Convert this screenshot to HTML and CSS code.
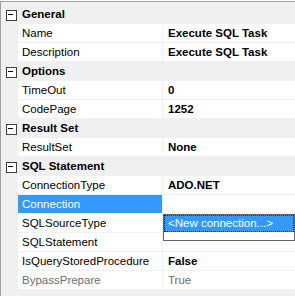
FILE: index.html
```html
<!DOCTYPE html>
<html lang="en">
<head>
    <meta charset="UTF-8">
    <title>Properties</title>
    <link rel="stylesheet" href="styles.css">
</head>
<body>

    <div class="grid">

        <!-- General -->
        <div class="row cat"><span class="toggle"></span><span class="cat-name">General</span></div>
        <div class="row"><span class="gutter"></span><span class="name">Name</span><span class="value bold">Execute SQL Task</span></div>
        <div class="row"><span class="gutter"></span><span class="name">Description</span><span class="value bold">Execute SQL Task</span></div>

        <!-- Options -->
        <div class="row cat"><span class="toggle"></span><span class="cat-name">Options</span></div>
        <div class="row"><span class="gutter"></span><span class="name">TimeOut</span><span class="value bold">0</span></div>
        <div class="row"><span class="gutter"></span><span class="name">CodePage</span><span class="value bold">1252</span></div>

        <!-- Result Set -->
        <div class="row cat"><span class="toggle"></span><span class="cat-name">Result Set</span></div>
        <div class="row"><span class="gutter"></span><span class="name">ResultSet</span><span class="value bold">None</span></div>

        <!-- SQL Statement -->
        <div class="row cat"><span class="toggle"></span><span class="cat-name">SQL Statement</span></div>
        <div class="row"><span class="gutter"></span><span class="name">ConnectionType</span><span class="value bold">ADO.NET</span></div>
        <div class="row selected"><span class="gutter"></span><span class="name">Connection</span><span class="value"></span></div>
        <div class="row"><span class="gutter"></span><span class="name">SQLSourceType</span><span class="value"></span></div>
        <div class="row"><span class="gutter"></span><span class="name">SQLStatement</span><span class="value"></span></div>
        <div class="row"><span class="gutter"></span><span class="name">IsQueryStoredProcedure</span><span class="value bold">False</span></div>
        <div class="row disabled"><span class="gutter"></span><span class="name">BypassPrepare</span><span class="value">True</span></div>

        <!-- Connection dropdown -->
        <div class="dropdown">
            <div class="option">&lt;New connection...&gt;</div>
        </div>

    </div>

</body>
</html>
```

FILE: styles.css
```css
* {
    margin: 0;
    padding: 0;
    box-sizing: border-box;
}

body {
    font-family: 'Segoe UI', 'Liberation Sans', Arial, sans-serif;
    font-size: 11.5px;
    color: #000;
    background-color: #fff;
    padding-top: 1px;
}

.grid {
    position: relative;
    border-top: 1px solid #a0a0a0;
    border-left: 1px solid #a0a0a0;
    background-color: #f0f0f0;
    padding-top: 3px;
    height: 295px;
}

.row {
    display: flex;
    align-items: stretch;
    height: 19px;
    border-bottom: 1px solid #f0f0f0;
    line-height: 18px;
}

.gutter {
    width: 17px;
    flex-shrink: 0;
}

.name {
    width: 145px;
    flex-shrink: 0;
    padding-left: 4px;
    background-color: #fff;
    border-right: 1px solid #f0f0f0;
    white-space: nowrap;
    overflow: hidden;
}

.value {
    flex: 1;
    padding-left: 5px;
    background-color: #fff;
    white-space: nowrap;
}

.bold {
    font-weight: bold;
}

.cat {
    font-weight: bold;
}

.toggle {
    width: 17px;
    flex-shrink: 0;
    position: relative;
}

/* minus box */
.toggle::before {
    content: '';
    position: absolute;
    left: 5px;
    top: 5px;
    width: 9px;
    height: 9px;
    border: 1px solid #404040;
    background-color: #fff;
}

.toggle::after {
    content: '';
    position: absolute;
    left: 7px;
    top: 9px;
    width: 5px;
    height: 1px;
    background-color: #000;
}

.cat-name {
    padding-left: 4px;
}

.selected .name {
    background-color: #3399ff;
    color: #fff;
}

.disabled .name,
.disabled .value {
    color: #6d6d6d;
}

.dropdown {
    position: absolute;
    left: 162px;
    top: 212px;
    width: 132px;
    height: 27px;
    border: 1px solid #646464;
    background-color: #fff;
}

.option {
    height: 17px;
    line-height: 15px;
    background-color: #3399ff;
    color: #fff;
    padding-left: 3px;
    border: 1px dotted #1a1a1a;
    white-space: nowrap;
}
```
